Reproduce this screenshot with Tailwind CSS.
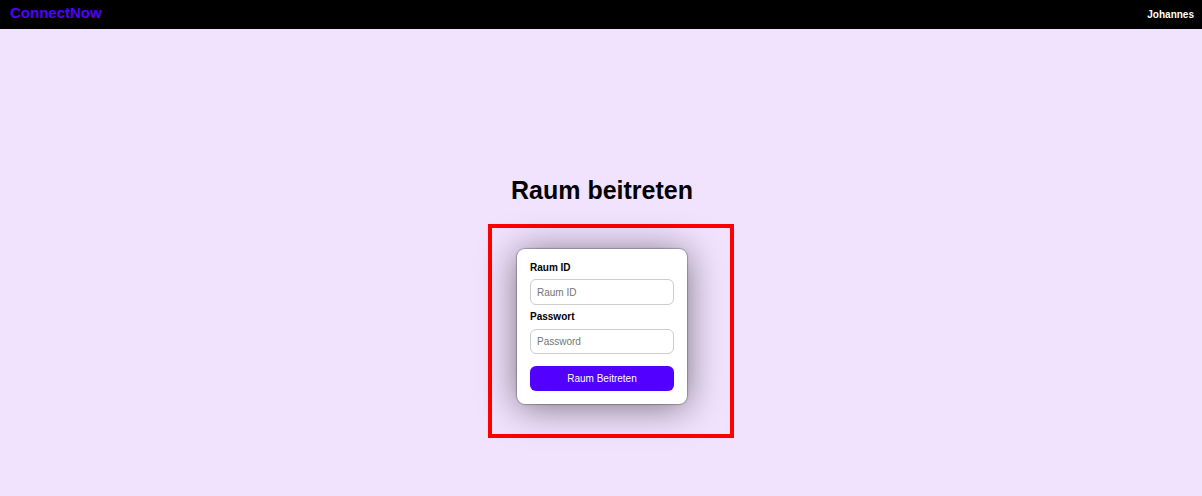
<!DOCTYPE html>
<html lang="de">
<head>
<meta charset="utf-8">
<title>ConnectNow</title>
<script src="https://cdn.jsdelivr.net/npm/@tailwindcss/browser@4"></script>
</head>
<body class="flex min-h-screen flex-col bg-[#f1e2fd] font-['Liberation_Sans',Arial,sans-serif] text-black">
<header class="flex h-[29px] items-center justify-between bg-black pr-2 pl-[10px] font-bold">
<a href="#" class="pb-1 text-[15px] leading-5 text-[#5200ff]">ConnectNow</a>
<a href="#" class="text-[10px] leading-4 text-white">Johannes</a>
</header>
<main class="flex flex-1 flex-col items-center pt-[145px] pl-0.5">
<h1 class="text-[25px] leading-8 font-bold">Raum beitreten</h1>
<div class="relative mt-[43px]">
<div class="absolute -top-[25px] -right-[47px] -bottom-[34px] -left-[29px] border-4 border-[#ff0000]"></div>
<form class="relative flex w-[170px] flex-col rounded-lg bg-white p-[13px] shadow-[0_0_1px_1px_rgba(0,0,0,0.25),0_3px_36px_rgba(0,0,0,0.5)]">
<label for="room" class="text-[10px] leading-3 font-bold">Raum ID</label>
<input id="room" type="text" placeholder="Raum ID" class="mt-[5px] h-[26px] rounded-md border border-[#cccccc] px-[6px] text-[10px] placeholder:text-[#757575]">
<label for="pw" class="mt-[6px] text-[10px] leading-3 font-bold">Passwort</label>
<input id="pw" type="password" placeholder="Password" class="mt-[6px] h-[25px] rounded-md border border-[#cccccc] px-[6px] text-[10px] placeholder:text-[#757575]">
<button type="button" class="mt-3 h-[25px] rounded-md bg-[#5200ff] text-[10px] text-white">Raum Beitreten</button>
</form>
</div>
</main>
</body>
</html>
